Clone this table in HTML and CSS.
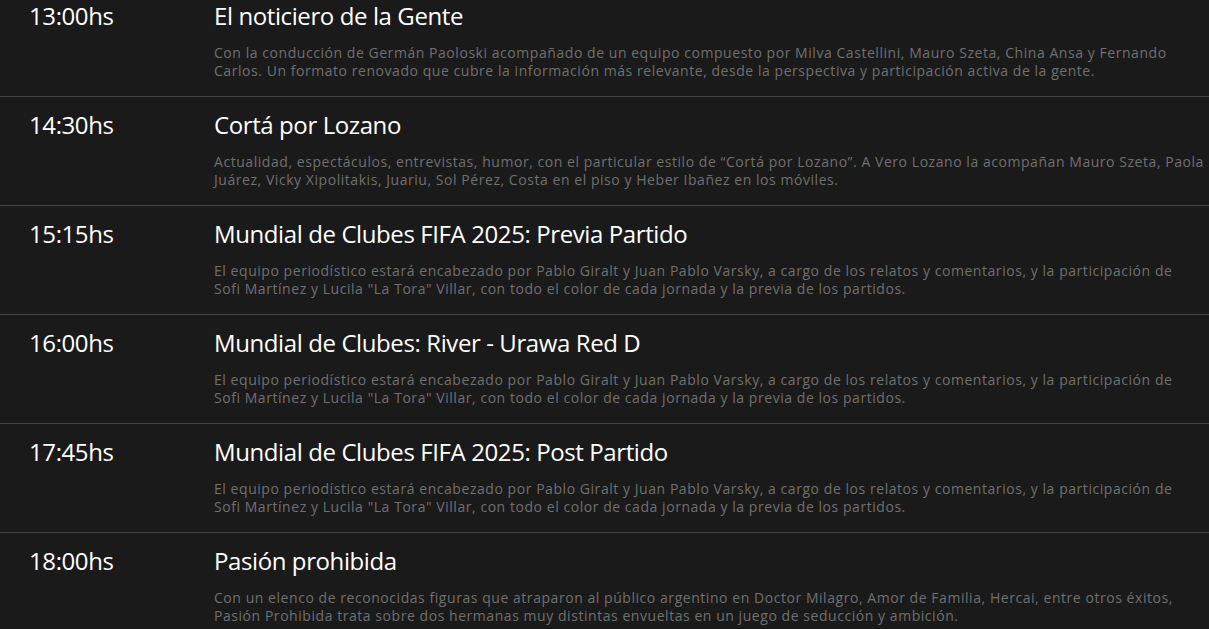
FILE: index.html
```html
<!DOCTYPE html>
<html lang="es">
<head>
<meta charset="utf-8">
<title>Programación</title>
<link rel="stylesheet" href="styles.css">
</head>
<body>
<ul class="schedule">
  <li class="slot">
    <div class="time">13:00hs</div>
    <div class="info">
      <h3 class="title">El noticiero de la Gente</h3>
      <p class="desc">Con la conducción de Germán Paoloski acompañado de un equipo compuesto por Milva Castellini, Mauro Szeta, China Ansa y Fernando<br>Carlos. Un formato renovado que cubre la información más relevante, desde la perspectiva y participación activa de la gente.</p>
    </div>
  </li>
  <li class="slot">
    <div class="time">14:30hs</div>
    <div class="info">
      <h3 class="title">Cortá por Lozano</h3>
      <p class="desc">Actualidad, espectáculos, entrevistas, humor, con el particular estilo de “Cortá por Lozano”. A Vero Lozano la acompañan Mauro Szeta, Paola<br>Juárez, Vicky Xipolitakis, Juariu, Sol Pérez, Costa en el piso y Heber Ibañez en los móviles.</p>
    </div>
  </li>
  <li class="slot">
    <div class="time">15:15hs</div>
    <div class="info">
      <h3 class="title">Mundial de Clubes FIFA 2025: Previa Partido</h3>
      <p class="desc">El equipo periodístico estará encabezado por Pablo Giralt y Juan Pablo Varsky, a cargo de los relatos y comentarios, y la participación de<br>Sofi Martínez y Lucila "La Tora" Villar, con todo el color de cada jornada y la previa de los partidos.</p>
    </div>
  </li>
  <li class="slot">
    <div class="time">16:00hs</div>
    <div class="info">
      <h3 class="title">Mundial de Clubes: River - Urawa Red D</h3>
      <p class="desc">El equipo periodístico estará encabezado por Pablo Giralt y Juan Pablo Varsky, a cargo de los relatos y comentarios, y la participación de<br>Sofi Martínez y Lucila "La Tora" Villar, con todo el color de cada jornada y la previa de los partidos.</p>
    </div>
  </li>
  <li class="slot">
    <div class="time">17:45hs</div>
    <div class="info">
      <h3 class="title">Mundial de Clubes FIFA 2025: Post Partido</h3>
      <p class="desc">El equipo periodístico estará encabezado por Pablo Giralt y Juan Pablo Varsky, a cargo de los relatos y comentarios, y la participación de<br>Sofi Martínez y Lucila "La Tora" Villar, con todo el color de cada jornada y la previa de los partidos.</p>
    </div>
  </li>
  <li class="slot">
    <div class="time">18:00hs</div>
    <div class="info">
      <h3 class="title">Pasión prohibida</h3>
      <p class="desc">Con un elenco de reconocidas figuras que atraparon al público argentino en Doctor Milagro, Amor de Familia, Hercai, entre otros éxitos,<br>Pasión Prohibida trata sobre dos hermanas muy distintas envueltas en un juego de seducción y ambición.</p>
    </div>
  </li>
</ul>
</body>
</html>
```
FILE: styles.css
```css
html, body {
  margin: 0;
  padding: 0;
  background: #1a1a1a;
  overflow: hidden;
}
body {
  font-family: "Open Sans", "Liberation Sans", sans-serif;
  color: #fff;
}
.schedule {
  list-style: none;
  margin: -12px 0 0 0;
  padding: 0;
}
.slot {
  display: grid;
  grid-template-columns: 185px 1fr;
  padding: 13px 0 16px 29px;
  border-bottom: 1px solid #444;
}
.time {
  font-size: 24px;
  line-height: 30px;
  letter-spacing: -0.4px;
  font-weight: 400;
  color: #fff;
}
.title {
  margin: 0;
  font-size: 24px;
  line-height: 30px;
  letter-spacing: -0.4px;
  font-weight: 400;
  color: #fff;
}
.desc {
  margin: 13px 0 0 0;
  font-size: 14px;
  line-height: 18px;
  letter-spacing: 0.55px;
  color: #707070;
  white-space: nowrap;
}
```
